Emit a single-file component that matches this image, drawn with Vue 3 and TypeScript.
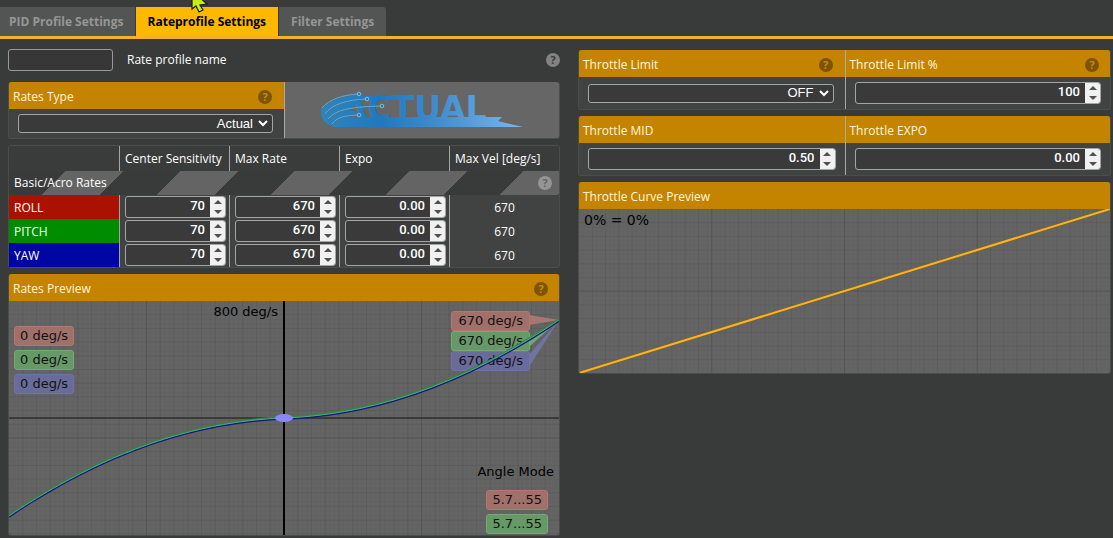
<script setup lang="ts">
import { ref } from 'vue'

interface Axis {
  name: string
  cls: string
  center: string
  max: string
  expo: string
  vel: string
}

const tabs = ['PID Profile Settings', 'Rateprofile Settings', 'Filter Settings']
const active = ref(1)
const profileName = ref('')
const ratesType = ref('Actual')
const throttleLimit = ref('OFF')

const axes = ref<Axis[]>([
  { name: 'ROLL', cls: 'roll', center: '70', max: '670', expo: '0.00', vel: '670' },
  { name: 'PITCH', cls: 'pitch', center: '70', max: '670', expo: '0.00', vel: '670' },
  { name: 'YAW', cls: 'yaw', center: '70', max: '670', expo: '0.00', vel: '670' },
])
type Field = 'center' | 'max' | 'expo'
const fields: { key: Field; label: string; step: number }[] = [
  { key: 'center', label: 'Center Sensitivity', step: 10 },
  { key: 'max', label: 'Max Rate', step: 10 },
  { key: 'expo', label: 'Expo', step: 0.01 },
]

const throttle = ref({ limit: '100', mid: '0.50', expo: '0.00' })

function bump(value: string, step: number): string {
  const digits = Math.abs(step) < 1 ? 2 : 0
  return Math.max(0, Number(value) + step).toFixed(digits)
}

const graphW = 550
const graphH = 234
const range = 800

function ratePath(offset: number): string {
  const points: string[] = []
  for (let i = -50; i <= 50; i++) {
    const x = i / 50
    const v = 70 * x + 600 * x * Math.abs(x)
    const px = graphW / 2 + (x * graphW) / 2
    const py = graphH / 2 - (v / range) * (graphH / 2) + offset
    points.push(`${px.toFixed(1)},${py.toFixed(1)}`)
  }
  return points.join(' ')
}

function gridPath(w: number, h: number, dx: number, dy: number): string {
  let d = ''
  for (let x = dx; x < w; x += dx) d += `M${x.toFixed(2)} 0V${h}`
  for (let y = dy; y < h; y += dy) d += `M0 ${y.toFixed(2)}H${w}`
  return d
}
</script>

<template>
  <div class="page">
    <nav class="tabs">
      <button
        v-for="(t, i) in tabs"
        :key="t"
        type="button"
        :class="['tab', { active: i === active }]"
        @click="active = i"
      >{{ t }}</button>
      <svg class="cursor" width="20" height="14" viewBox="0 0 20 14" aria-hidden="true">
        <path d="M2 -4V9L6 6L9 12L13 10L10 5L17 4L8 -4Z" fill="#c6ec1c" stroke="#1c2208" stroke-width="1.2" />
      </svg>
    </nav>

    <main class="columns">
      <div class="column">
        <div class="name-row">
          <input id="profile-name" v-model="profileName" class="text" type="text" />
          <label for="profile-name">Rate profile name</label>
          <span class="help plain">?</span>
        </div>

        <section class="panel pair rates-type">
          <div class="cell">
            <div class="head"><label for="rates-type">Rates Type</label><span class="help">?</span></div>
            <div class="body">
              <div class="select">
                <select id="rates-type" v-model="ratesType"><option>Actual</option></select>
                <svg width="10" height="7" viewBox="0 0 10 7"><path d="M1 1L5 5L9 1" fill="none" stroke="#fff" stroke-width="2" /></svg>
              </div>
            </div>
          </div>
          <div class="cell logo">
            <svg width="204" height="38" viewBox="0 0 204 38" role="img" aria-label="ACTUAL">
              <defs>
                <linearGradient id="blue" gradientUnits="userSpaceOnUse" x1="0" y1="0" x2="204" y2="0">
                  <stop offset="0" stop-color="#2b86bd" />
                  <stop offset="0.3" stop-color="#1e78c2" />
                  <stop offset="0.6" stop-color="#438fd0" />
                  <stop offset="1" stop-color="#78b8ee" />
                </linearGradient>
              </defs>
              <path d="M1 17C8 10 22 6 38 3L42 5L24 26H182L178 30L203 36H14C4 33 0 27 1 17Z" fill="url(#blue)" />
              <path d="M36 5H76V9H42L30 18Z" fill="url(#blue)" />
              <text x="22" y="29" class="wordmark" fill="url(#blue)">ACTUAL</text>
              <path d="M2 19C9 9 24 4 38 3M5 25C12 14 27 9 46 8M8 30C17 18 36 16 61 15M12 34C18 26 26 25 38 24" fill="none" stroke="#686c6e" stroke-width="1" />
              <path d="M2 17C9 8 24 4 37 3M5 23C12 13 27 9 45 8M8 28C17 17 36 16 60 15M12 33C18 25 26 25 37 24" fill="none" stroke="#55addb" stroke-width="1" />
              <g fill="#3f7296" stroke="#76c4e8" stroke-width="1">
                <circle cx="39" cy="3" r="1.8" /><circle cx="47" cy="8" r="1.8" /><circle cx="62" cy="15" r="1.8" /><circle cx="39" cy="24" r="1.8" />
              </g>
            </svg>
          </div>
        </section>

        <table class="rates">
          <thead>
            <tr>
              <th></th>
              <th v-for="f in fields" :key="f.key" scope="col">{{ f.label }}</th>
              <th scope="col">Max Vel [deg/s]</th>
            </tr>
          </thead>
          <tbody>
            <tr class="stripe">
              <td colspan="5"><div><span>Basic/Acro Rates</span><span class="help plain">?</span></div></td>
            </tr>
            <tr v-for="a in axes" :key="a.name" class="axis">
              <th scope="row" :class="a.cls">{{ a.name }}</th>
              <td v-for="f in fields" :key="f.key">
                <div class="number">
                  <input v-model="a[f.key]" type="number" :step="f.step" :aria-label="a.name + ' ' + f.label" />
                  <span class="steps">
                    <button type="button" aria-label="Increase" @click="a[f.key] = bump(a[f.key], f.step)"><svg width="8" height="4" viewBox="0 0 8 4"><path d="M0 4L4 0L8 4Z" /></svg></button>
                    <button type="button" aria-label="Decrease" @click="a[f.key] = bump(a[f.key], -f.step)"><svg width="8" height="4" viewBox="0 0 8 4"><path d="M0 0L4 4L8 0Z" /></svg></button>
                  </span>
                </div>
              </td>
              <td class="vel">{{ a.vel }}</td>
            </tr>
          </tbody>
        </table>

        <section class="panel">
          <div class="head preview"><span>Rates Preview</span><span class="help">?</span></div>
          <div class="graph rates-graph">
            <svg class="plot" :viewBox="`0 0 ${graphW} ${graphH}`" preserveAspectRatio="none">
              <path class="g1" :d="gridPath(550, 234, 4.583, 4.566)" />
              <path class="g2" :d="gridPath(550, 234, 13.75, 13.7)" />
              <path class="g3" :d="gridPath(550, 234, 137.5, 137)" />
              <path d="M0 117H550" stroke="#3a3a3a" stroke-width="2" />
              <path d="M275 0V234" stroke="#000" stroke-width="2" />
              <path d="M520 14L550 19L520 24Z" fill="#a97772" />
              <path d="M520 36L550 19L520 46Z" fill="#6ca871" />
              <path d="M520 54L550 19L520 66Z" fill="#7073a3" />
            </svg>
            <div class="stack left">
              <span class="balloon red">0 deg/s</span>
              <span class="balloon green">0 deg/s</span>
              <span class="balloon blue">0 deg/s</span>
            </div>
            <div class="stack right">
              <span class="balloon red">670 deg/s</span>
              <span class="balloon green">670 deg/s</span>
              <span class="balloon blue">670 deg/s</span>
            </div>
            <svg class="plot" :viewBox="`0 0 ${graphW} ${graphH}`" preserveAspectRatio="none">
              <g fill="none">
                <polyline :points="ratePath(-1)" stroke="#2f8a35" stroke-width="1.4" />
                <polyline :points="ratePath(1)" stroke="#101c78" stroke-width="1.6" />
                <polyline :points="ratePath(0)" stroke="#58a596" stroke-width="1" />
              </g>
              <ellipse cx="275" cy="117" rx="9" ry="4" fill="#8788fa" />
            </svg>
            <span class="scale">800 deg/s</span>
            <div class="angle">
              <span class="caption">Angle Mode</span>
              <span class="balloon red">5.7...55</span>
              <span class="balloon green">5.7...55</span>
            </div>
          </div>
        </section>
      </div>

      <div class="column second">
        <section class="panel pair">
          <div class="cell">
            <div class="head"><label for="t-limit">Throttle Limit</label><span class="help">?</span></div>
            <div class="body">
              <div class="select">
                <select id="t-limit" v-model="throttleLimit"><option>OFF</option></select>
                <svg width="10" height="7" viewBox="0 0 10 7"><path d="M1 1L5 5L9 1" fill="none" stroke="#fff" stroke-width="2" /></svg>
              </div>
            </div>
          </div>
          <div class="cell">
            <div class="head"><label for="t-percent">Throttle Limit %</label><span class="help">?</span></div>
            <div class="body">
              <div class="number">
                <input id="t-percent" v-model="throttle.limit" type="number" />
                <span class="steps">
                  <button type="button" aria-label="Increase" @click="throttle.limit = bump(throttle.limit, 1)"><svg width="8" height="4" viewBox="0 0 8 4"><path d="M0 4L4 0L8 4Z" /></svg></button>
                  <button type="button" aria-label="Decrease" @click="throttle.limit = bump(throttle.limit, -1)"><svg width="8" height="4" viewBox="0 0 8 4"><path d="M0 0L4 4L8 0Z" /></svg></button>
                </span>
              </div>
            </div>
          </div>
        </section>

        <section class="panel pair">
          <div class="cell">
            <div class="head"><label for="t-mid">Throttle MID</label></div>
            <div class="body">
              <div class="number">
                <input id="t-mid" v-model="throttle.mid" type="number" step="0.01" />
                <span class="steps">
                  <button type="button" aria-label="Increase" @click="throttle.mid = bump(throttle.mid, 0.01)"><svg width="8" height="4" viewBox="0 0 8 4"><path d="M0 4L4 0L8 4Z" /></svg></button>
                  <button type="button" aria-label="Decrease" @click="throttle.mid = bump(throttle.mid, -0.01)"><svg width="8" height="4" viewBox="0 0 8 4"><path d="M0 0L4 4L8 0Z" /></svg></button>
                </span>
              </div>
            </div>
          </div>
          <div class="cell">
            <div class="head"><label for="t-expo">Throttle EXPO</label></div>
            <div class="body">
              <div class="number">
                <input id="t-expo" v-model="throttle.expo" type="number" step="0.01" />
                <span class="steps">
                  <button type="button" aria-label="Increase" @click="throttle.expo = bump(throttle.expo, 0.01)"><svg width="8" height="4" viewBox="0 0 8 4"><path d="M0 4L4 0L8 4Z" /></svg></button>
                  <button type="button" aria-label="Decrease" @click="throttle.expo = bump(throttle.expo, -0.01)"><svg width="8" height="4" viewBox="0 0 8 4"><path d="M0 0L4 4L8 0Z" /></svg></button>
                </span>
              </div>
            </div>
          </div>
        </section>

        <section class="panel">
          <div class="head"><span>Throttle Curve Preview</span></div>
          <div class="graph throttle-graph">
            <svg class="plot" viewBox="0 0 532 164" preserveAspectRatio="none">
              <path class="g1" :d="gridPath(532, 164, 4.433, 4.566)" />
              <path class="g2" :d="gridPath(532, 164, 13.3, 13.7)" />
              <path class="g3" :d="gridPath(532, 164, 133, 82)" />
              <path d="M0 164L532 0" stroke="#8f6410" stroke-width="3" />
              <path d="M0 164L532 0" stroke="#f5b42c" stroke-width="2" />
            </svg>
            <span class="readout">0% = 0%</span>
          </div>
        </section>
      </div>
    </main>
  </div>
</template>

<style>
body {
  background: #393b3a;
}
</style>

<style scoped>
.page {
  font: 12px/16px "Open Sans", "Noto Sans", sans-serif;
  color: #fff;
  overflow: hidden;
}
.page *,
.page {
  box-sizing: border-box;
}
.tabs {
  position: relative;
  display: flex;
  gap: 1px;
  padding-top: 7px;
  border-bottom: 3px solid #f5b323;
}
.tab {
  height: 29px;
  border: 0;
  padding: 0 12px;
  background: #535554;
  color: #959695;
  font: 700 12px/16px "Open Sans", "Noto Sans", sans-serif;
}
.tab:first-child {
  padding: 0 11px 0 9px;
}
.tab:nth-child(3) {
  border-radius: 0 3px 0 0;
}
.tab.active {
  background: #ffb800;
  color: #000;
}
.cursor {
  position: absolute;
  left: 190px;
  top: 0;
}
.columns {
  display: grid;
  grid-template-columns: 552fr 533fr;
  gap: 18px;
  padding: 10px 2px 0 8px;
}
.column {
  min-width: 0;
  display: flex;
  flex-direction: column;
  gap: 6px;
}
.second {
  padding-top: 1px;
}
.name-row {
  display: flex;
  align-items: center;
  height: 22px;
  margin-bottom: 5px;
}
.text {
  width: 105px;
  height: 22px;
  margin-right: 14px;
  border: 1px solid #999;
  border-radius: 3px;
  background: #363736;
  color: #fff;
}
.help {
  flex: none;
  width: 14px;
  height: 14px;
  margin-left: auto;
  border-radius: 50%;
  background: #7c5404;
  color: #c98a06;
  font-size: 11px;
  font-weight: 700;
  line-height: 14px;
  text-align: center;
}
.help.plain {
  background: #828382;
  color: #393b3a;
}
.stripe .help.plain {
  background: #949594;
  color: #646464;
}
.panel {
  border: 1px solid #4b4d4c;
  border-top: 0;
  border-radius: 3px;
  overflow: hidden;
}
.pair {
  display: grid;
  grid-template-columns: 1fr 1fr;
  background: #414342;
}
.cell + .cell {
  border-left: 1px solid #a9a9a5;
}
.head {
  display: flex;
  align-items: center;
  height: 27px;
  padding: 2px 11px 0 4px;
  background: #c48400;
  color: #fff6df;
}
.pair .cell:first-child .help {
  margin-right: 1px;
}
.body {
  display: flex;
  align-items: center;
  height: 32px;
  padding: 0 9px;
}
.rates-type .body {
  height: 29px;
}
.select {
  position: relative;
  flex: 1;
  margin-right: 2px;
}
.select select {
  display: block;
  appearance: none;
  width: 100%;
  height: 19px;
  padding: 0 19px 0 4px;
  border: 1px solid #a5a5a5;
  border-radius: 3px;
  background: #393a39;
  color: #fff;
  font: 13px/16px "Liberation Sans", Arial, sans-serif;
  text-align: right;
  text-align-last: right;
}
.select svg {
  position: absolute;
  right: 5px;
  top: 6px;
  pointer-events: none;
}
.number {
  flex: 1;
  display: flex;
  height: 22px;
  border: 1px solid #a5a5a5;
  border-radius: 3px;
  background: #393a39;
  overflow: hidden;
}
.number input {
  flex: 1;
  min-width: 0;
  width: 0;
  padding: 0 5px 2px 4px;
  border: 0;
  background: none;
  color: #fff;
  font: 500 13px/18px Roboto, "Open Sans", sans-serif;
  text-align: right;
  appearance: textfield;
}
.number input::-webkit-inner-spin-button {
  display: none;
}
.steps {
  width: 15px;
  display: flex;
  flex-direction: column;
  background: #f1f1f1;
}
.steps button {
  flex: 1;
  display: flex;
  align-items: center;
  justify-content: center;
  padding: 0;
  border: 0;
  background: none;
}
.steps path {
  fill: #505050;
}
.logo {
  display: flex;
  align-items: center;
  justify-content: center;
  background: #666;
}
.logo svg {
  overflow: visible;
}
.wordmark {
  font: 700 33px/38px "DejaVu Sans", Verdana, sans-serif;
}
.rates {
  width: 100%;
  table-layout: fixed;
  border-spacing: 0;
  border: 1px solid #4b4d4c;
  border-radius: 3px;
  background: #414342;
}
.rates th,
.rates td {
  padding: 0;
  font-weight: 400;
  text-align: left;
}
.rates th + th,
.rates td + td,
.rates th + td {
  border-left: 1px solid #a5a5a5;
}
.rates thead th {
  height: 25px;
  padding: 1px 0 0 5px;
  background: #3a3c3b;
  white-space: nowrap;
}
.stripe td {
  height: 24px;
  background: repeating-linear-gradient(135deg, #393b3a 0 40px, #646464 40px 81px);
}
.stripe div {
  display: flex;
  align-items: center;
  padding: 0 7px 0 5px;
}
.axis th,
.axis td {
  height: 24px;
}
.rates .axis th {
  padding: 2px 0 0 5px;
}
.axis td .number {
  margin: 0 3px 0 5px;
}
.roll {
  background: #ab1100;
}
.pitch {
  background: #008c00;
}
.yaw {
  background: #0006a4;
}
.rates .axis .vel {
  padding-top: 2px;
  text-align: center;
}
.graph {
  position: relative;
  background: #646464;
  color: #000;
  font: 13px/16px "DejaVu Sans", Verdana, sans-serif;
}
.rates-graph {
  height: 234px;
}
.throttle-graph {
  height: 164px;
}
.plot {
  position: absolute;
  inset: 0;
  width: 100%;
  height: 100%;
}
.g1,
.g2,
.g3 {
  fill: none;
  stroke: #000;
  stroke-width: 1;
}
.g1 {
  opacity: 0.02;
}
.g2 {
  opacity: 0.05;
}
.g3 {
  opacity: 0.08;
}
.stack,
.angle {
  position: absolute;
  display: flex;
  flex-direction: column;
}
.left {
  left: 5px;
  top: 25px;
  gap: 4px;
}
.right {
  right: 29px;
  top: 10px;
}
.angle {
  right: 5px;
  top: 163px;
  align-items: flex-end;
  gap: 4px;
}
.caption {
  margin-bottom: 6px;
}
.angle .balloon {
  margin-right: 6px;
}
.balloon {
  height: 20px;
  padding: 1px 5px;
  border: 1px solid;
  border-radius: 3px;
  color: #111;
}
.right .balloon {
  padding: 1px 6px;
}
.red {
  background: #a0706b;
  border-color: #b17872;
}
.green {
  background: #679868;
  border-color: #74a976;
}
.blue {
  background: #696b9b;
  border-color: #7173a8;
}
.scale {
  position: absolute;
  right: calc(50% + 6px);
  top: 3px;
}
.readout {
  position: absolute;
  left: 5px;
  top: 3px;
  font-size: 14px;
}
</style>
